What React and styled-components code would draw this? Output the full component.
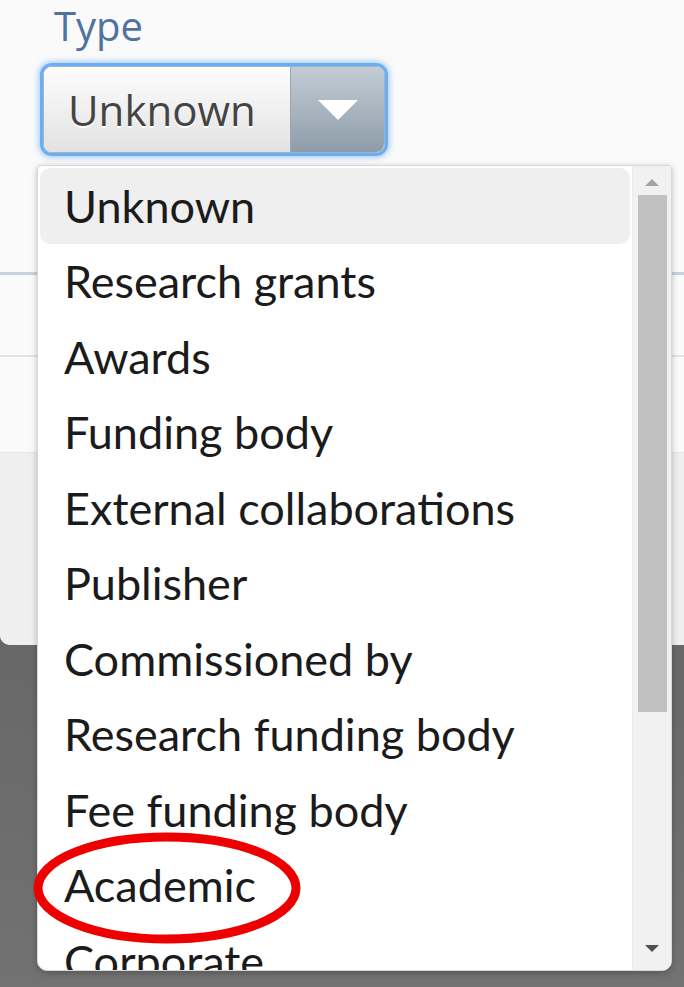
import React from "react";
import styled, { createGlobalStyle } from "styled-components";

const options = [
  "Unknown",
  "Research grants",
  "Awards",
  "Funding body",
  "External collaborations",
  "Publisher",
  "Commissioned by",
  "Research funding body",
  "Fee funding body",
  "Academic",
  "Corporate",
];

function App() {
  return (
    <Page>
      <GlobalStyle />
      <Modal>
        <ModalBody>
          <Field>
            <Label>Type</Label>
            <Select>
              <SelectValue>Unknown</SelectValue>
              <SelectButton>
                <svg width="44" height="24" viewBox="0 0 44 24">
                  <path d="M2 2 L42 2 L22 22 Z" fill="#fff" />
                </svg>
              </SelectButton>
            </Select>
          </Field>
          <TableRow $tone="strong" />
          <TableRow $tone="light" />
        </ModalBody>
        <Footer />
      </Modal>

      <Dropdown>
        <OptionList>
          {options.map((opt, i) => (
            <Option key={opt} $active={i === 0}>
              {opt}
            </Option>
          ))}
        </OptionList>
        <Scrollbar>
          <ScrollArrow $dir="up" />
          <Track>
            <Thumb />
          </Track>
          <ScrollArrow $dir="down" />
        </Scrollbar>
      </Dropdown>

      <Highlight width="272" height="114" viewBox="0 0 272 114">
        <ellipse cx="136" cy="57" rx="129" ry="51" fill="none" stroke="#ee0000" strokeWidth="9" />
      </Highlight>
    </Page>
  );
}

const GlobalStyle = createGlobalStyle`
  body {
    margin: 0;
    background: #6e6e6e;
  }
`;

const Page = styled.div`
  position: relative;
  width: 684px;
  height: 987px;
  overflow: hidden;
  background: linear-gradient(#545454, #727272);
  font-family: "Open Sans", sans-serif;
`;

const Modal = styled.div`
  display: flex;
  flex-direction: column;
  height: 645px;
  background: #fafafa;
  border-bottom-left-radius: 10px;
`;

const ModalBody = styled.div`
  height: 452px;
  display: flex;
  flex-direction: column;
`;

const Field = styled.div`
  display: flex;
  flex-direction: column;
  align-items: flex-start;
  padding-left: 43px;
  height: 272px;
`;

const Label = styled.label`
  margin-left: 11px;
  padding-top: 4px;
  color: #4f72a0;
  font-size: 40px;
  line-height: 44px;
`;

const Select = styled.div`
  display: flex;
  width: 340px;
  height: 85px;
  margin-top: 18px;
  border: 1px solid #a9b3bd;
  border-radius: 9px;
  overflow: hidden;
  box-shadow: 0 0 0 3px #6aaef5, 0 0 6px 4px rgba(80, 160, 245, 0.6);
`;

const SelectValue = styled.div`
  flex: 1;
  display: flex;
  align-items: center;
  padding-left: 24px;
  background: linear-gradient(#fdfdfd, #e2e2e2);
  color: #444;
  font-size: 42px;
  text-shadow: 0 2px 0 #fff;
`;

const SelectButton = styled.div`
  width: 93px;
  display: flex;
  align-items: center;
  justify-content: center;
  border-left: 1px solid #9aa6b2;
  background: linear-gradient(#c3ccd4, #8e9caa);
`;

const TableRow = styled.div`
  height: ${(p) => (p.$tone === "strong" ? "80px" : "95px")};
  border-top: ${(p) => (p.$tone === "strong" ? "3px solid #c9d1da" : "2px solid #e0e4e9")};
`;

const Footer = styled.div`
  flex: 1;
  background: #efefef;
  border-top: 1px solid #e4e4e4;
  border-bottom-left-radius: 10px;
`;

const Dropdown = styled.div`
  position: absolute;
  left: 37px;
  top: 165px;
  width: 633px;
  height: 804px;
  display: flex;
  background: #fff;
  border: 1px solid #d8d8d8;
  border-radius: 4px 4px 10px 10px;
  box-shadow: 0 2px 6px rgba(0, 0, 0, 0.25);
  overflow: hidden;
`;

const OptionList = styled.div`
  flex: 1;
  padding: 2px 2px 0 2px;
  overflow: hidden;
`;

const Option = styled.div`
  height: 75.5px;
  display: flex;
  align-items: center;
  padding-left: 24px;
  border-radius: 10px;
  background: ${(p) => (p.$active ? "#efefef" : "transparent")};
  color: #1b1b1b;
  font-family: Lato, sans-serif;
  font-size: 45px;
  white-space: nowrap;
`;

const Scrollbar = styled.div`
  width: 38px;
  display: flex;
  flex-direction: column;
  align-items: center;
  background: #f1f1f1;
  border-left: 1px solid #ececec;
`;

const ScrollArrow = styled.div`
  width: 0;
  height: 0;
  margin: ${(p) => (p.$dir === "up" ? "13px 0 9px" : "20px 0 18px")};
  border-left: 7px solid transparent;
  border-right: 7px solid transparent;
  ${(p) =>
    p.$dir === "up"
      ? "border-bottom: 7px solid #a3a3a3;"
      : "border-top: 7px solid #505050;"}
`;

const Track = styled.div`
  flex: 1;
  width: 100%;
  display: flex;
  justify-content: center;
`;

const Thumb = styled.div`
  width: 29px;
  height: 517px;
  background: #c1c1c1;
`;

const Highlight = styled.svg`
  position: absolute;
  left: 31px;
  top: 831px;
`;

export default App;
